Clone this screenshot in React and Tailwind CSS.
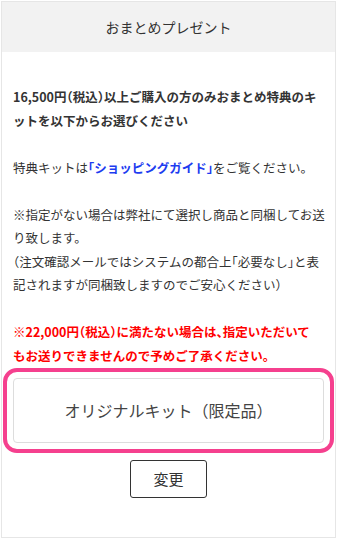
import React from 'react';

const jp = "font-['Noto_Sans_CJK_JP','Noto_Sans',sans-serif]";

export default function App() {
  return (
    <div className={`w-[337px] h-[539px] bg-white p-px ${jp}`}>
      <div className="flex flex-col h-[537px] w-[335px] border border-[#e6e6e6]">
        {/* Header */}
        <div className="h-[50px] bg-[#f2f2f2] flex items-center justify-center text-[14px] text-[#333]">
          おまとめプレゼント
        </div>

        {/* Body */}
        <div className="px-[11px] pt-[33px] text-[12.5px] leading-[23.5px] text-[#333]">
          <div className="[font-feature-settings:'halt']">
            <p className="font-bold mb-[23.5px] whitespace-nowrap">
              16,500円（税込）以上ご購入の方のみおまとめ特典のキ
              <br />
              ットを以下からお選びください
            </p>
            <p className="mb-[23.5px] whitespace-nowrap">
              特典キットは<span className="font-bold text-[#1d3cf0]">「ショッピングガイド」</span>をご覧ください。
            </p>
            <p className="mb-[23.5px] whitespace-nowrap">
              ※指定がない場合は弊社にて選択し商品と同梱してお送
              <br />
              り致します。
              <br />
              （注文確認メールではシステムの都合上「必要なし」と表
              <br />
              記されますが同梱致しますのでご安心ください）
            </p>
            <p className="font-bold text-[#ff0000] whitespace-nowrap">
              ※22,000円（税込）に満たない場合は、指定いただいて
              <br />
              もお送りできませんので予めご了承ください。
            </p>
          </div>

          {/* Selected kit */}
          <div className="mt-[11px] h-[65px] rounded-[4px] border border-[#dddddd] outline-4 outline-solid outline-offset-[6px] outline-[#f5408e] flex items-center justify-center text-[16px] text-[#444]">
            オリジナルキット（限定品）
          </div>

          <div className="flex justify-center mt-[17px]">
            <button className="w-[77px] h-[38px] rounded-[3px] border border-[#333] bg-white text-[15px] text-[#333]">
              変更
            </button>
          </div>
        </div>
      </div>
    </div>
  );
}
